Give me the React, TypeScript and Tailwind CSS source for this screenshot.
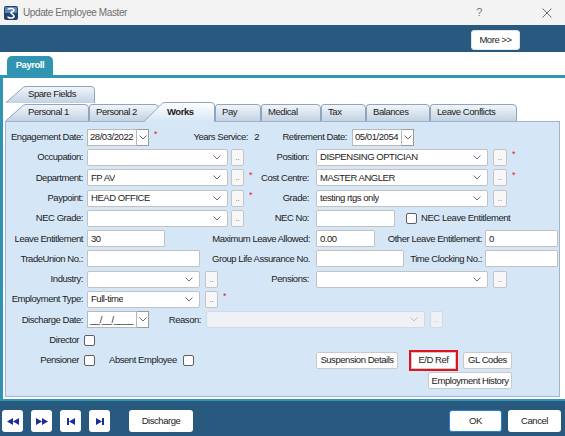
import React from "react";

const FONT = "font-['Liberation_Sans',Arial,sans-serif]";

function Chevron({ light = false }: { light?: boolean }) {
  return (
    <svg width="8" height="5" viewBox="0 0 8 5" className="shrink-0">
      <path d="M0.5 0.5 L4 4 L7.5 0.5" fill="none" stroke={light ? "#b9bfc6" : "#707070"} strokeWidth="1" />
    </svg>
  );
}

function Star() {
  return <span className="self-start mt-[3px] ml-[5px] w-[4px] text-[9px] leading-none text-[#e02424]">*</span>;
}

function Label({ text, cls = "w-[77px]" }: { text: string; cls?: string }) {
  return <div className={`shrink-0 text-right whitespace-nowrap ${cls}`}>{text}</div>;
}

function Combo({ value = "", cls, disabled = false }: { value?: string; cls: string; disabled?: boolean }) {
  return (
    <div
      className={`shrink-0 flex items-center justify-between h-[17px] border rounded-[2px] pl-[3px] pr-[6px] ${
        disabled ? "bg-[#eef2f6] border-[#d3d9e0]" : "bg-white border-[#c2c2c2]"
      } ${cls}`}
    >
      <span className="whitespace-nowrap overflow-hidden">{value}</span>
      <Chevron light={disabled} />
    </div>
  );
}

function Input({ value = "", cls }: { value?: string; cls: string }) {
  return (
    <div className={`shrink-0 flex items-center h-[17px] bg-white border border-[#c2c2c2] rounded-[1px] pl-[3px] ${cls}`}>
      {value}
    </div>
  );
}

function DateBox({ value }: { value: string }) {
  return (
    <div className="shrink-0 flex items-center">
      <div className="w-[50px] h-[17px] flex items-center bg-white border border-[#b8b8b8] pl-[2px] whitespace-nowrap overflow-hidden">
        {value}
      </div>
      <div className="w-[12px] h-[17px] flex items-center justify-center bg-white border border-[#9a9a9a] border-l-0">
        <Chevron />
      </div>
    </div>
  );
}

function Dots({ cls = "ml-[3px] w-[13px]", disabled = false }: { cls?: string; disabled?: boolean }) {
  return (
    <div
      className={`shrink-0 h-[17px] flex items-end justify-center pb-[3px] border rounded-[2px] text-[8px] leading-none tracking-normal ${
        disabled ? "bg-[#eef2f6] border-[#d3d9e0] text-[#b7bcc2]" : "bg-[#f7f7f7] border-[#c4c4c4] text-[#9a4a4a]"
      } ${cls}`}
    >
      ..
    </div>
  );
}

function Check({ cls = "" }: { cls?: string }) {
  return <div className={`shrink-0 w-[11px] h-[11px] bg-[#fbfbfb] border border-[#5f5f5f] rounded-[2px] ${cls}`} />;
}

function Btn({ text, cls }: { text: string; cls: string }) {
  return (
    <div
      className={`shrink-0 flex items-center justify-center h-[17px] bg-[#fdfdfd] border border-[#c9c9c9] rounded-[2px] whitespace-nowrap ${cls}`}
    >
      {text}
    </div>
  );
}

function Tab({
  label,
  w,
  cls,
  slant = false,
  active = false,
}: {
  label: string;
  w: number;
  cls: string;
  slant?: boolean;
  active?: boolean;
}) {
  const h = active ? 20 : 17;
  const s = slant ? (active ? 18 : 17) : 0;
  const top = slant
    ? `M0.5 ${h} L${s} 2.5 Q${s + 1.5} 0.5 ${s + 4} 0.5 L${w - 4} 0.5 Q${w - 0.5} 0.5 ${w - 0.5} 4 L${w - 0.5} ${h}`
    : `M0.5 ${h} L0.5 3 Q0.5 0.5 3 0.5 L${w - 4} 0.5 Q${w - 0.5} 0.5 ${w - 0.5} 4 L${w - 0.5} ${h}`;
  const id = `tg-${label.replace(/\W/g, "")}`;
  return (
    <div className={`relative shrink-0 ${active ? "z-10 -mb-[1px]" : ""} ${cls}`}>
      <svg width={w} height={h} className="absolute inset-0">
        <defs>
          <linearGradient id={id} x1="0" y1="0" x2="0" y2="1">
            <stop offset="0" stopColor={active ? "#ffffff" : "#f3f6fa"} />
            <stop offset="1" stopColor={active ? "#d5e6f7" : "#c2d2e3"} />
          </linearGradient>
        </defs>
        <path d={`${top} Z`} fill={`url(#${id})`} />
        <path d={top} fill="none" stroke="#8ea5bf" strokeWidth="1" />
      </svg>
      <div
        className={`relative h-full flex items-center whitespace-nowrap ${active ? "font-bold" : ""} ${
          slant ? (active ? "pl-[24px]" : "pl-[23px]") : "pl-[7px]"
        }`}
      >
        {label}
      </div>
    </div>
  );
}

function NavIcon({ kind }: { kind: "rew" | "ff" | "first" | "last" }) {
  const c = "#1c2c9c";
  return (
    <svg width="12" height="7" viewBox="0 0 12 7">
      {kind === "rew" && (
        <>
          <polygon points="6,0 6,7 0,3.5" fill={c} />
          <polygon points="12,0 12,7 6,3.5" fill={c} />
        </>
      )}
      {kind === "ff" && (
        <>
          <polygon points="0,0 0,7 6,3.5" fill={c} />
          <polygon points="6,0 6,7 12,3.5" fill={c} />
        </>
      )}
      {kind === "first" && (
        <>
          <rect x="2" y="0" width="2" height="7" fill={c} />
          <polygon points="10,0 10,7 4,3.5" fill={c} />
        </>
      )}
      {kind === "last" && (
        <>
          <polygon points="2,0 2,7 8,3.5" fill={c} />
          <rect x="8" y="0" width="2" height="7" fill={c} />
        </>
      )}
    </svg>
  );
}

export default function App() {
  return (
    <div
      className={`w-[565px] h-[436px] overflow-hidden flex flex-col bg-white text-[9.5px] tracking-[-0.45px] text-[#1b1b1b] ${FONT}`}
    >
      {/* title bar */}
      <div className="h-[25px] shrink-0 flex items-center bg-[#f3f3f3] pl-[4px]">
        <svg width="14" height="14" viewBox="0 0 14 14">
          <rect x="0" y="0" width="14" height="14" rx="2" fill="#23416f" />
          <rect x="1" y="1" width="12" height="6" rx="1" fill="#5f86b8" />
          <path
            d="M4 3.5 C4 2 10 2 10 4 C10 5.5 7 6 7 7 C7 8 10.5 8.5 10 10.5 C9.5 12.5 4 12.5 4 10.5"
            fill="none"
            stroke="#ffffff"
            strokeWidth="1.6"
          />
        </svg>
        <span className="ml-[5px] text-[10px] tracking-[-0.4px] text-[#6f6f6f]">Update Employee Master</span>
        <span className="ml-auto text-[11px] text-[#7a7a7a] font-light">?</span>
        <svg width="10" height="10" viewBox="0 0 10 10" className="ml-[60px] mr-[13px]">
          <path d="M0.5 0.5 L9.5 9.5 M9.5 0.5 L0.5 9.5" stroke="#6d6d6d" strokeWidth="1" />
        </svg>
      </div>

      {/* dark band */}
      <div className="h-[27px] shrink-0 flex justify-end items-start bg-[#285a80] pt-[5px] pr-[45px]">
        <div className="w-[49px] h-[20px] flex items-center justify-center bg-white rounded-[3px] border border-[#e4e4e4]">
          More &gt;&gt;
        </div>
      </div>

      {/* payroll tab strip */}
      <div className="h-[23px] shrink-0 flex items-end bg-white pl-[7px]">
        <div className="w-[46px] h-[19px] flex items-center justify-center bg-[#2f95b3] rounded-t-[5px] text-white font-bold">
          Payroll
        </div>
      </div>
      <div className="h-[3px] shrink-0 bg-[#2f95b3]" />

      {/* main */}
      <div className="h-[321px] shrink-0 flex">
        <div className="w-[3px] bg-[#2f95b3]" />
        <div className="flex-1 flex flex-col pt-[8px] pl-[2px] pb-[2px]">
          <div className="h-[17px] flex">
            <Tab label="Spare Fields" w={90} cls="w-[90px] h-[17px]" slant />
          </div>
          <div className="h-[18px] flex items-end">
            <Tab label="Personal 1" w={84} cls="w-[84px] h-[17px]" slant />
            <Tab label="Personal 2" w={70} cls="w-[70px] h-[17px]" />
            <Tab label="Works" w={72} cls="w-[72px] h-[20px] -ml-[16px]" slant active />
            <Tab label="Pay" w={46} cls="w-[46px] h-[17px]" />
            <Tab label="Medical" w={60} cls="w-[60px] h-[17px]" />
            <Tab label="Tax" w={45} cls="w-[45px] h-[17px]" />
            <Tab label="Balances" w={64} cls="w-[64px] h-[17px]" />
            <Tab label="Leave Conflicts" w={87} cls="w-[87px] h-[17px]" />
          </div>

          {/* panel */}
          <div className="w-[555px] flex-1 bg-[#d5e6f7] border border-[#9fb5cc] pt-[5px] flex flex-col">
            <div className="flex items-center h-[20.3px]">
              <Label text="Engagement Date:" />
              <div className="ml-[4px]">
                <DateBox value="28/03/2022" />
              </div>
              <Star />
              <Label text="Years Service:" cls="w-[90px]" />
              <div className="w-[11px] text-right">2</div>
              <Label text="Retirement Date:" cls="w-[88px]" />
              <div className="ml-[5px]">
                <DateBox value="05/01/2054" />
              </div>
            </div>

            <div className="flex items-center h-[20.3px]">
              <Label text="Occupation:" />
              <Combo cls="ml-[4px] w-[141px]" />
              <Dots />
              <div className="w-[9px]" />
              <Label text="Position:" cls="w-[56px]" />
              <Combo value="DISPENSING OPTICIAN" cls="ml-[7px] w-[172px]" />
              <Dots cls="ml-[5px] w-[14px]" />
              <Star />
            </div>

            <div className="flex items-center h-[20.3px]">
              <Label text="Department:" />
              <Combo value="FP AV" cls="ml-[4px] w-[141px]" />
              <Dots />
              <Star />
              <Label text="Cost Centre:" cls="w-[56px]" />
              <Combo value="MASTER ANGLER" cls="ml-[7px] w-[172px]" />
              <Dots cls="ml-[5px] w-[14px]" />
              <Star />
            </div>

            <div className="flex items-center h-[20.3px]">
              <Label text="Paypoint:" />
              <Combo value="HEAD OFFICE" cls="ml-[4px] w-[141px]" />
              <Dots />
              <Star />
              <Label text="Grade:" cls="w-[56px]" />
              <Combo value="testing rtgs only" cls="ml-[7px] w-[172px]" />
              <Dots cls="ml-[5px] w-[14px]" />
            </div>

            <div className="flex items-center h-[20.3px]">
              <Label text="NEC Grade:" />
              <Combo cls="ml-[4px] w-[141px]" />
              <Dots />
              <div className="w-[9px]" />
              <Label text="NEC No:" cls="w-[56px]" />
              <Input cls="ml-[7px] w-[79px]" />
              <Check cls="ml-[11px]" />
              <span className="ml-[4px] whitespace-nowrap">NEC Leave Entitlement</span>
            </div>

            <div className="flex items-center h-[20.3px]">
              <Label text="Leave Entitlement" />
              <Input value="30" cls="ml-[4px] w-[78px]" />
              <Label text="Maximum Leave Allowed:" cls="w-[145px]" />
              <Input value="0.00" cls="ml-[6px] w-[59px]" />
              <Label text="Other Leave Entitlement:" cls="w-[107px]" />
              <Input value="0" cls="ml-[3px] w-[73px]" />
            </div>

            <div className="flex items-center h-[20.3px]">
              <Label text="TradeUnion No.:" />
              <Input cls="ml-[4px] w-[113px]" />
              <Label text="Group Life Assurance No." cls="w-[110px]" />
              <Input cls="ml-[6px] w-[88px]" />
              <Label text="Time Clocking No.:" cls="w-[78px]" />
              <Input cls="ml-[3px] w-[73px]" />
            </div>

            <div className="flex items-center h-[20.3px]">
              <Label text="Industry:" />
              <Combo cls="ml-[4px] w-[113px]" />
              <Dots cls="ml-[5px] w-[13px]" />
              <Label text="Pensions:" cls="w-[91px]" />
              <Combo cls="ml-[7px] w-[172px]" />
              <Dots cls="ml-[5px] w-[14px]" />
            </div>

            <div className="flex items-center h-[20.3px]">
              <Label text="Employment Type:" />
              <Combo value="Full-time" cls="ml-[4px] w-[113px]" />
              <Dots cls="ml-[5px] w-[13px]" />
              <Star />
            </div>

            <div className="flex items-center h-[20.3px]">
              <Label text="Discharge Date:" />
              <div className="ml-[4px]">
                <DateBox value="__/__/____" />
              </div>
              <Label text="Reason:" cls="w-[52px]" />
              <Combo cls="ml-[5px] w-[219px]" disabled />
              <Dots cls="ml-[5px] w-[13px]" disabled />
            </div>

            <div className="flex items-center h-[20.3px]">
              <Label text="Director" cls="w-[77px] pr-[4px]" />
              <Check cls="ml-[1px]" />
            </div>

            <div className="flex items-center h-[20.3px]">
              <div className="w-[310px] shrink-0 flex items-center">
                <Label text="Pensioner" cls="w-[77px] pr-[4px]" />
                <Check cls="ml-[1px]" />
                <span className="ml-[14px] whitespace-nowrap">Absent Employee</span>
                <Check cls="ml-[6px]" />
              </div>
              <Btn text="Suspension Details" cls="w-[82px]" />
              <div className="ml-[11px] w-[49px] h-[21px] border-2 border-[#e0141e] flex">
                <div className="flex-1 flex items-center justify-center bg-[#fdfdfd] border border-[#c9c9c9]">E/D Ref</div>
              </div>
              <Btn text="GL Codes" cls="ml-[5px] w-[49px]" />
            </div>

            <div className="flex items-center h-[20.3px]">
              <div className="w-[422px] shrink-0" />
              <Btn text="Employment History" cls="w-[84px]" />
            </div>
          </div>
        </div>
      </div>
      <div className="h-[2px] shrink-0 bg-[#2f95b3]" />

      {/* bottom band */}
      <div className="flex-1 flex items-start bg-[#285a80] pt-[9px] pl-[2px] pr-[4px]">
        {(["rew", "ff", "first", "last"] as const).map((k, i) => (
          <div
            key={k}
            className={`w-[21px] h-[22px] flex items-center justify-center bg-white rounded-[3px] ${i > 0 ? "ml-[8px]" : ""}`}
          >
            <NavIcon kind={k} />
          </div>
        ))}
        <div className="ml-[19px] w-[64px] h-[22px] flex items-center justify-center bg-white rounded-[3px]">
          Discharge
        </div>
        <div className="ml-auto w-[53px] h-[22px] flex items-center justify-center bg-white rounded-[3px] border border-[#2b7fd4]">
          OK
        </div>
        <div className="ml-[6px] w-[53px] h-[22px] flex items-center justify-center bg-white rounded-[3px]">
          Cancel
        </div>
      </div>
    </div>
  );
}
